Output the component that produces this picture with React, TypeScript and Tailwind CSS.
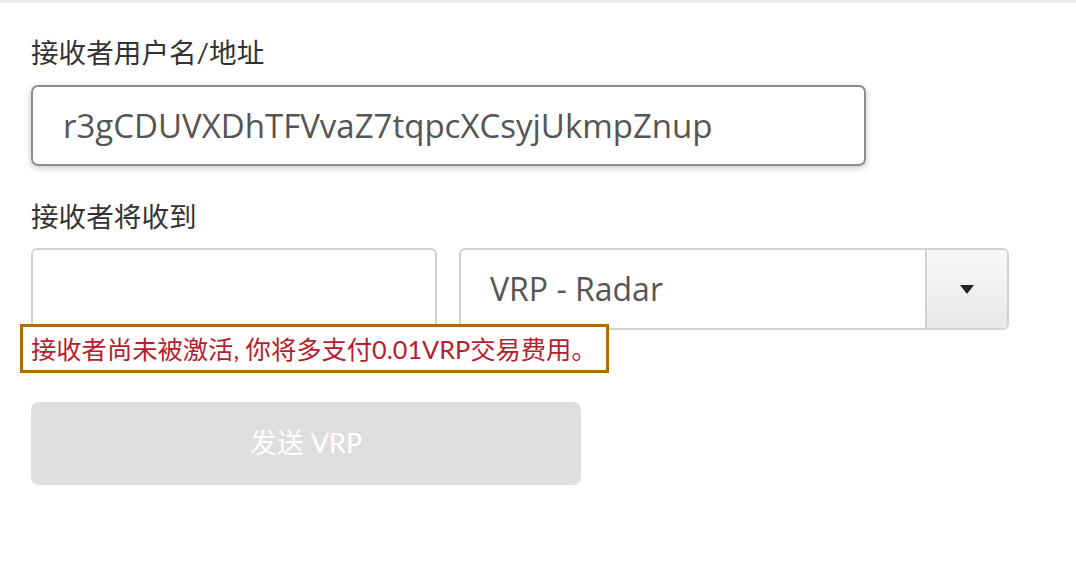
import { useState } from "react"

const cjk = "font-['Lato','Noto_Sans_CJK_SC',sans-serif]"
const latin = "font-['Open_Sans','Noto_Sans_CJK_SC',sans-serif]"

export default function App() {
  const [address, setAddress] = useState("r3gCDUVXDhTFVvaZ7tqpcXCsyjUkmpZnup")
  const [amount, setAmount] = useState("")

  return (
    <div className="min-h-[564px] w-[1076px] bg-white">
      <div className="h-[3px] w-full bg-[#ebebeb]" />
      <div className="pl-[31px]">
        <label className={`mt-[34px] block text-[27.6px] leading-[32px] text-[#333] ${cjk}`}>
          接收者用户名/地址
        </label>
        <input
          value={address}
          onChange={(e) => setAddress(e.target.value)}
          className={`mt-[16px] block h-[81px] w-[835px] rounded-[7px] border-[2px] border-[#8c8c8c] px-[30px] text-[33px] text-[#555] shadow-[0_2px_7px_rgba(0,0,0,0.22)] outline-none ${latin}`}
        />

        <label className={`mt-[35px] block text-[27.6px] leading-[32px] text-[#333] ${cjk}`}>
          接收者将收到
        </label>
        <div className="mt-[15px] flex gap-[22px]">
          <input
            value={amount}
            onChange={(e) => setAmount(e.target.value)}
            className={`h-[82px] w-[406px] rounded-[6px] border-[2px] border-[#d2d2d2] px-[30px] text-[32px] text-[#555] outline-none ${latin}`}
          />
          <div className="flex h-[82px] w-[550px] overflow-hidden rounded-[6px] border-[2px] border-[#d2d2d2]">
            <div className={`flex flex-1 items-center pl-[29px] text-[32px] text-[#555] ${latin}`}>
              VRP - Radar
            </div>
            <div className="flex w-[82px] items-center justify-center border-l-[2px] border-[#d2d2d2] bg-gradient-to-b from-[#f8f8f8] to-[#e8e8e8]">
              <svg width="14" height="9" viewBox="0 0 14 9">
                <path d="M0 0 H14 L7 9 Z" fill="#222" />
              </svg>
            </div>
          </div>
        </div>

        <div className="-ml-[11px] -mt-[6px]">
          <div
            className={`inline-block border-[3px] border-[#b36b00] bg-white pb-[6px] pl-[8px] pr-[9px] pt-[7px] text-[25.3px] leading-[30px] text-[#b81c2e] ${cjk}`}
          >
            接收者尚未被激活, 你将多支付0.01VRP交易费用。
          </div>
        </div>

        <button
          disabled
          className={`mt-[29px] flex h-[83px] w-[550px] items-center justify-center rounded-[8px] bg-[#dededc] text-[27px] text-white ${cjk}`}
        >
          发送 VRP
        </button>
      </div>
    </div>
  )
}
